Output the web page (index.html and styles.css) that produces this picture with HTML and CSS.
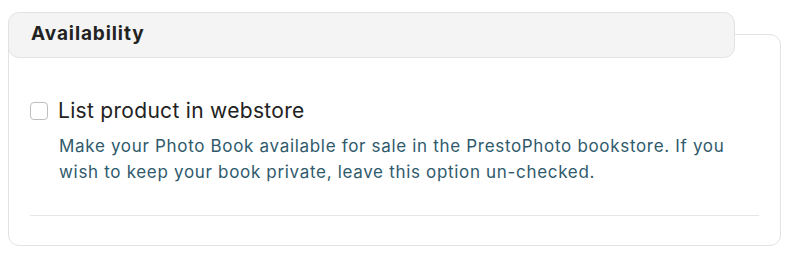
FILE: index.html
```html
<!DOCTYPE html>
<html>
<head>
<meta charset="utf-8">
<link rel="stylesheet" href="styles.css">
</head>
<body>
<section class="card">
  <header class="tab"><h2 class="tab-title">Availability</h2></header>
  <div class="card-body">
    <label class="option">
      <span class="checkbox"></span>
      <span class="option-label">List product in webstore</span>
    </label>
    <p class="help">Make your Photo Book available for sale in the PrestoPhoto bookstore. If you wish to keep your book private, leave this option un-checked.</p>
    <hr class="divider">
  </div>
</section>
</body>
</html>
```

FILE: styles.css
```css
html, body { margin: 0; padding: 0; background: #fff; }
body { padding: 8px; font-family: "Inter", "Liberation Sans", sans-serif; }
.card {
  margin-top: 26px;
  width: 773px;
  height: 212px;
  box-sizing: border-box;
  border: 1px solid #e3e3e3;
  border-radius: 11px;
}
.tab {
  margin: -23px -1px 0 -1px;
  width: 727px;
  height: 46px;
  box-sizing: border-box;
  background: #f4f4f4;
  border: 1px solid #e3e3e3;
  border-radius: 11px;
  display: flex;
  align-items: center;
  padding: 0 0 3px 22px;
}
.tab-title {
  margin: 0;
  font-size: 19px;
  font-weight: 700;
  letter-spacing: 0.9px;
  color: #222;
}
.card-body { padding: 41px 21px 0 21px; }
.option { display: flex; align-items: center; gap: 10px; }
.checkbox {
  width: 18px; height: 18px;
  box-sizing: border-box;
  border: 1px solid #bdbdbd;
  border-radius: 4px;
  background: #fff;
}
.option-label { font-size: 21px; font-weight: 400; color: #222; line-height: 24px; letter-spacing: 0.3px; }
.help {
  margin: 10px 24px 0 29px;
  font-size: 17px;
  font-weight: 400;
  line-height: 26px;
  letter-spacing: 0.68px;
  color: #2f5a6c;
}
.divider { margin: 30px 0 0 0; border: 0; border-top: 1px solid #e6e6e6; }
```
